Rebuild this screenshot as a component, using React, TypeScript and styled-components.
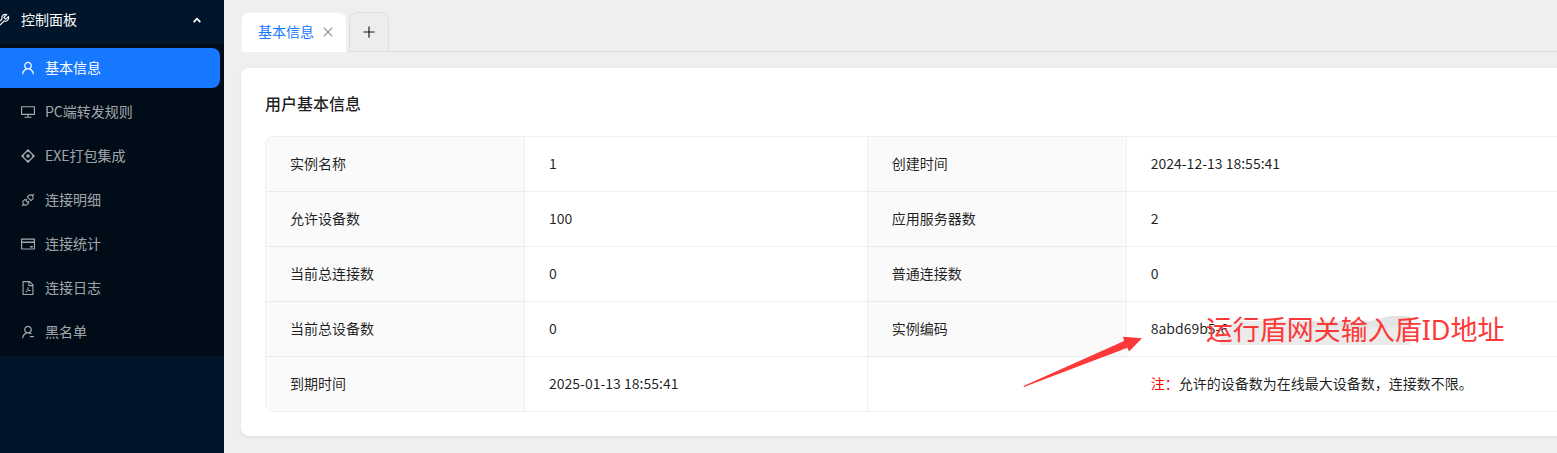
import React from "react";
import styled, { createGlobalStyle } from "styled-components";
import {
  AiOutlineTool,
  AiOutlineUser,
  AiOutlineDesktop,
  AiOutlineApi,
  AiOutlineCreditCard,
  AiOutlineFilePdf,
  AiOutlineUserDelete,
  AiOutlineClose,
  AiOutlinePlus,
} from "react-icons/ai";

const GlobalStyle = createGlobalStyle`
  *, *::before, *::after { box-sizing: border-box; }
  body {
    margin: 0;
    background: #efefef;
    color: rgba(0, 0, 0, 0.88);
    font-family: "Noto Sans CJK SC", sans-serif;
    font-size: 14px;
    line-height: 22px;
  }
  button { font: inherit; border: 0; margin: 0; padding: 0; cursor: pointer; }
`;

const Layout = styled.div`
  display: flex;
  min-height: 100vh;
  overflow: hidden;
`;

const Sidebar = styled.nav`
  flex: none;
  width: 224px;
  background: #001529;
`;

const GroupButton = styled.button`
  display: flex;
  align-items: center;
  width: 100%;
  height: 40px;
  margin-bottom: 4px;
  padding-right: 23px;
  background: none;
  color: #fff;
  text-align: left;
  svg { flex: none; }
`;

const ToolIcon = styled(AiOutlineTool)`
  margin-left: -4px;
  margin-right: 11px;
`;

const Label = styled.span`
  flex: 1;
  padding-bottom: 2px;
`;

const SubMenu = styled.ul`
  display: flex;
  flex-direction: column;
  gap: 4px;
  margin: 0;
  padding: 4px 4px 4px 0;
  list-style: none;
  background: #000c17;
`;

const MenuLink = styled.a<{ $active?: boolean }>`
  display: flex;
  align-items: center;
  gap: 10px;
  height: 40px;
  padding-left: 21px;
  border-radius: 0 8px 8px 0;
  background: ${(p) => (p.$active ? "#1677ff" : "transparent")};
  color: ${(p) => (p.$active ? "#fff" : "rgba(255, 255, 255, 0.65)")};
  text-decoration: none;
`;

const Main = styled.main`
  flex: 1;
  min-width: 0;
  padding: 12px 0 16px 17px;
`;

const TabBar = styled.div`
  display: flex;
  gap: 2px;
  height: 40px;
  margin-bottom: 16px;
  box-shadow: inset 0 -1px #dedede;
`;

const Tab = styled.div`
  display: flex;
  align-items: center;
  gap: 8px;
  padding: 0 12px 0 16px;
  border: 1px solid #f3f3f3;
  border-bottom-color: #fff;
  border-radius: 8px 8px 0 0;
  background: #fff;
`;

const TabLabel = styled.button`
  padding-bottom: 2px;
  background: none;
  color: #1677ff;
`;

const CloseButton = styled.button`
  display: flex;
  background: none;
  color: rgba(0, 0, 0, 0.45);
`;

const AddButton = styled.button`
  display: flex;
  align-items: center;
  justify-content: center;
  width: 40px;
  border: 1px solid #dedede;
  border-radius: 8px 8px 0 0;
  background: #ededed;
  color: rgba(0, 0, 0, 0.88);
`;

const Card = styled.section`
  margin-right: -52px;
  padding: 24px;
  border-radius: 8px;
  background: #fff;
  box-shadow: 0 1px 2px rgba(0, 0, 0, 0.06), 0 1px 6px -1px rgba(0, 0, 0, 0.04);
`;

const CardTitle = styled.h2`
  margin: 0 0 22px;
  font-size: 16px;
  font-weight: 500;
  line-height: 22px;
`;

const InfoTable = styled.table`
  width: 100%;
  table-layout: fixed;
  border: 1px solid #f0f0f0;
  border-radius: 8px;
  border-collapse: separate;
  border-spacing: 0;
  overflow: hidden;
  tr:last-child > * { height: 54px; border-bottom: 0; }
`;

const LabelCol = styled.col`
  width: 259px;
`;

const ValueCol = styled.col`
  width: 26%;
`;

const HeadCell = styled.th`
  height: 55px;
  padding: 0 24px 2px;
  border-right: 1px solid #f0f0f0;
  border-bottom: 1px solid #eaeaea;
  background: #fafafa;
  font-weight: 400;
  text-align: left;
`;

const Cell = styled.td<{ $divided?: boolean }>`
  position: relative;
  height: 55px;
  padding: 0 24px 2px;
  border-right: ${(p) => (p.$divided ? "1px solid #f0f0f0" : "0")};
  border-bottom: 1px solid #f0f0f0;
`;

const NoteMark = styled.span`
  color: #f00;
`;

const Smudge = styled.svg`
  position: absolute;
  left: 88px;
  top: 12px;
`;

const Callout = styled.span`
  position: absolute;
  left: 79px;
  top: 8px;
  color: #fd3838;
  font-family: "Noto Sans", "Noto Sans CJK SC", sans-serif;
  font-size: 27px;
  line-height: 40px;
  white-space: nowrap;
`;

const Arrow = styled.svg`
  position: absolute;
  left: -105px;
  top: 32px;
  z-index: 1;
  overflow: visible;
`;

const DiamondIcon = () => (
  <svg width="14" height="14" viewBox="0 0 14 14" fill="none" stroke="currentColor" strokeWidth="1.4">
    <path d="M7 1 13 7 7 13 1 7z" strokeLinejoin="round" />
    <path d="M7 1v2.200M13 7h-2.200M7 13v-2.200M1 7h2.200" strokeWidth="1" />
    <circle cx="7" cy="7" r="1.8" fill="currentColor" stroke="none" />
  </svg>
);

const ChevronUp = () => (
  <svg width="8" height="6" viewBox="0 0 8 6" fill="none" stroke="currentColor" strokeWidth="1.800">
    <path d="M.7 5.200 4 1.700l3.300 3.500" />
  </svg>
);

const glyphBox = "64 64 896 896";

const menu = [
  { label: "基本信息", Icon: AiOutlineUser, active: true },
  { label: "PC端转发规则", Icon: AiOutlineDesktop },
  { label: "EXE打包集成", Icon: DiamondIcon },
  { label: "连接明细", Icon: AiOutlineApi },
  { label: "连接统计", Icon: AiOutlineCreditCard },
  { label: "连接日志", Icon: AiOutlineFilePdf },
  { label: "黑名单", Icon: AiOutlineUserDelete },
];

const rows = [
  ["实例名称", "1", "创建时间", "2024-12-13 18:55:41"],
  ["允许设备数", "100", "应用服务器数", "2"],
  ["当前总连接数", "0", "普通连接数", "0"],
];

export default function App() {
  return (
    <Layout>
      <GlobalStyle />
      <Sidebar>
        <GroupButton aria-expanded="true">
          <ToolIcon size={14} viewBox={glyphBox} />
          <Label>控制面板</Label>
          <ChevronUp />
        </GroupButton>
        <SubMenu>
          {menu.map(({ label, Icon, active }) => (
            <li key={label}>
              <MenuLink href="#" $active={active}>
                <Icon size={14} viewBox={glyphBox} />
                <Label>{label}</Label>
              </MenuLink>
            </li>
          ))}
        </SubMenu>
      </Sidebar>
      <Main>
        <TabBar>
          <Tab>
            <TabLabel>基本信息</TabLabel>
            <CloseButton aria-label="关闭">
              <AiOutlineClose size={12} viewBox={glyphBox} />
            </CloseButton>
          </Tab>
          <AddButton aria-label="新增">
            <AiOutlinePlus size={16} />
          </AddButton>
        </TabBar>
        <Card>
          <CardTitle>用户基本信息</CardTitle>
          <InfoTable>
            <colgroup>
              <LabelCol />
              <ValueCol />
              <LabelCol />
              <col />
            </colgroup>
            <tbody>
              {rows.map(([a, b, c, d]) => (
                <tr key={a}>
                  <HeadCell scope="row">{a}</HeadCell>
                  <Cell $divided>{b}</Cell>
                  <HeadCell scope="row">{c}</HeadCell>
                  <Cell>{d}</Cell>
                </tr>
              ))}
              <tr>
                <HeadCell scope="row">当前总设备数</HeadCell>
                <Cell $divided>0</Cell>
                <HeadCell scope="row">实例编码</HeadCell>
                <Cell>
                  8abd69b5-6
                  <Smudge width="196" height="32" viewBox="0 0 196 32">
                    <path d="M5 31v-6L16 10l4-3h135l20-5h20v29z" fill="#ebebeb" />
                    <path d="M92 8h63l20-6h20v11H92z" fill="#e4e4e4" />
                  </Smudge>
                  <Callout>运行盾网关输入盾ID地址</Callout>
                  <Arrow width="120" height="54" viewBox="0 0 120 54">
                    <path d="M1.500 52 102 7l-1-4.300 19 1.500L107 17.500l-1.500-3.800L2 53z" fill="#fd3838" />
                  </Arrow>
                </Cell>
              </tr>
              <tr>
                <HeadCell scope="row">到期时间</HeadCell>
                <Cell $divided>2025-01-13 18:55:41</Cell>
                <Cell />
                <Cell>
                  <NoteMark>注：</NoteMark>允许的设备数为在线最大设备数，连接数不限。
                </Cell>
              </tr>
            </tbody>
          </InfoTable>
        </Card>
      </Main>
    </Layout>
  );
}
